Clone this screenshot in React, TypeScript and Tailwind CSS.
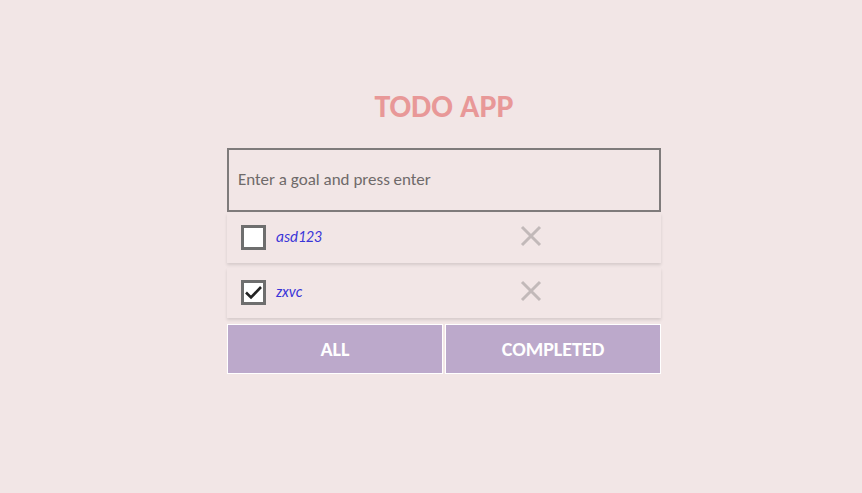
import React from "react";

function XIcon() {
  return (
    <svg width="22" height="22" viewBox="0 0 22 22" className="shrink-0">
      <path d="M2 2 L20 20 M20 2 L2 20" stroke="#c2b9b9" strokeWidth="3" />
    </svg>
  );
}

function Item({ text, checked }: { text: string; checked: boolean }) {
  return (
    <div className="flex h-[50px] items-center bg-[#f2e6e6] shadow-[0_2px_3px_rgba(0,0,0,0.12)]">
      <div className="ml-[14px] -mt-[2px] flex h-[25px] w-[25px] items-center justify-center border-[3px] border-[#6e6e6e] bg-white">
        {checked && (
          <svg width="19" height="19" viewBox="0 0 19 19">
            <path d="M2 9.5 L7 14.5 L17 4" stroke="#222" strokeWidth="2.6" fill="none" />
          </svg>
        )}
      </div>
      <span className="ml-[10px] -mt-[3px] w-[244px] text-[15.5px] italic text-[#3a35d8]">{text}</span>
      <div className="-mt-[5px]">
        <XIcon />
      </div>
    </div>
  );
}

export default function App() {
  return (
    <div
      className="flex min-h-[493px] w-full flex-col items-center bg-[#f2e6e6] pl-[26px]"
      style={{ fontFamily: "Carlito, Calibri, 'Open Sans', sans-serif" }}
    >
      <h1 className="mt-[86px] text-[32px] font-bold leading-[42px] text-[#e89898]">TODO APP</h1>
      <div className="mt-[20px] flex w-[434px] flex-col">
        <div className="flex h-[64px] items-center border-2 border-[#7f7b7b] px-[9px] text-[17px] text-[#6f6a6a]">
          Enter a goal and press enter
        </div>
        <div className="mt-[1px] flex flex-col gap-[5px]">
          <Item text="asd123" checked={false} />
          <Item text="zxvc" checked={true} />
        </div>
        <div className="mt-[6px] flex gap-[2px]">
          <button className="h-[50px] flex-1 border border-white bg-[#bca9cb] text-[20px] font-bold text-white">ALL</button>
          <button className="h-[50px] flex-1 border border-white bg-[#bca9cb] text-[20px] font-bold text-white">COMPLETED</button>
        </div>
      </div>
    </div>
  );
}
